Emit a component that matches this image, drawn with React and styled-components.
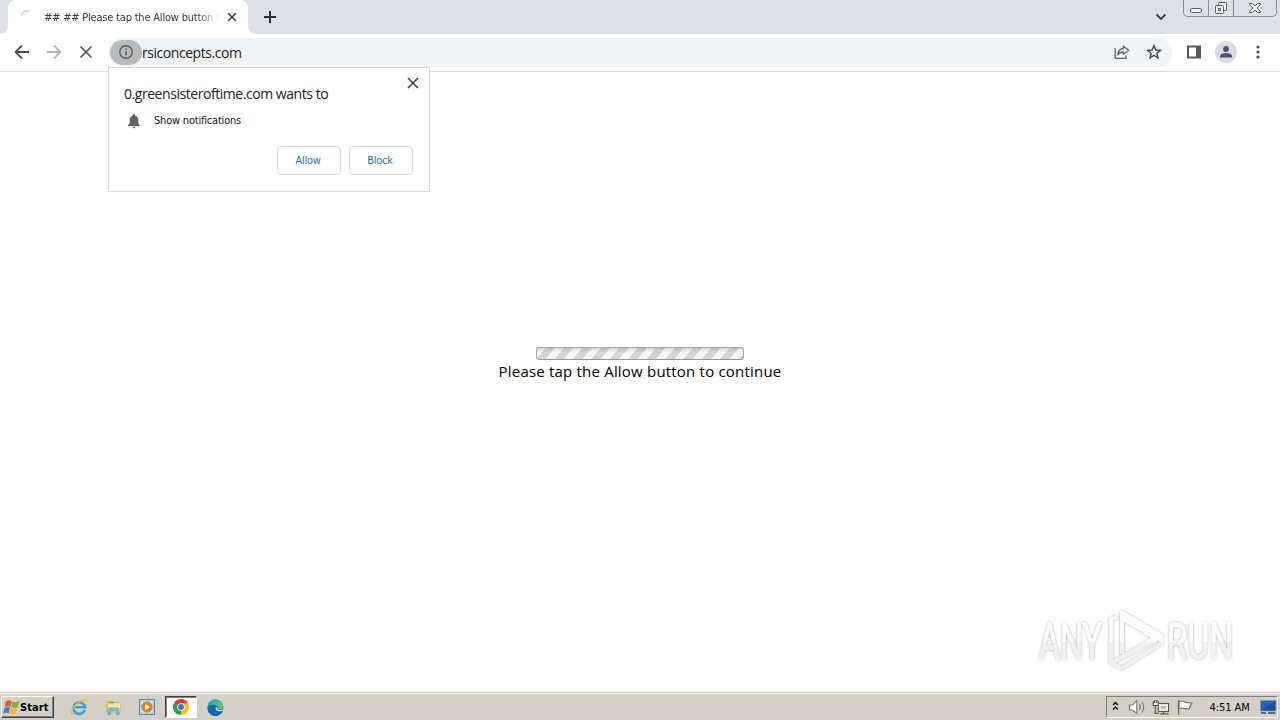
import styled, { createGlobalStyle } from "styled-components";

const GlobalStyle = createGlobalStyle`
  * {
    box-sizing: border-box;
  }
  body {
    margin: 0;
    overflow: hidden;
    background: #fff;
  }
`;

const uiFont = `"DejaVu Sans Condensed", "DejaVu Sans", sans-serif`;
const lightFont = `"Open Sans", "Noto Sans", sans-serif`;

const Screen = styled.div`
  width: 1280px;
  height: 720px;
  display: flex;
  flex-direction: column;
  position: relative;
  font-family: ${uiFont};
  color: #111;
`;

const TabStrip = styled.div`
  height: 34px;
  background: #dee1e6;
  display: flex;
  align-items: flex-start;
  padding-left: 8px;
`;

const Tab = styled.div`
  width: 240px;
  height: 34px;
  background: #fff;
  border-radius: 8px 8px 0 0;
  display: flex;
  align-items: center;
  padding: 0 10px 0 12px;
  position: relative;

  &::before,
  &::after {
    content: "";
    position: absolute;
    bottom: 0;
    width: 8px;
    height: 8px;
  }
  &::before {
    left: -8px;
    background: radial-gradient(circle at 0 0, transparent 7.5px, #fff 8px);
  }
  &::after {
    right: -8px;
    background: radial-gradient(circle at 100% 0, transparent 7.5px, #fff 8px);
  }
`;

const TabTitle = styled.div`
  width: 175px;
  margin-left: 8px;
  overflow: hidden;
  white-space: nowrap;
  font-size: 11px;
  letter-spacing: -0.2px;
  color: #35363a;
  mask-image: linear-gradient(90deg, #000 88%, transparent 100%);
`;

const TabClose = styled.div`
  display: flex;
  margin-left: 8px;
`;

const NewTab = styled.div`
  display: flex;
  margin: 10px 0 0 15px;
`;

const TabSearch = styled.div`
  display: flex;
  margin: 13px 16px 0 auto;
`;

const WindowControls = styled.div`
  display: flex;
  width: 94px;
  height: 17px;
  margin-right: 3px;
  border: 1px solid #8c9097;
  border-top: 0;
  border-radius: 0 0 5px 5px;
`;

const WindowButton = styled.div`
  width: ${(p) => p.$width}px;
  display: flex;
  align-items: center;
  justify-content: center;
  border-right: ${(p) => (p.$last ? 0 : "1px solid #8c9097")};
`;

const Toolbar = styled.div`
  height: 38px;
  background: #fff;
  border-bottom: 1px solid #dcdde0;
  display: flex;
  align-items: center;
  padding: 0 12px 1px 12px;
`;

const NavIcon = styled.div`
  width: 20px;
  height: 20px;
  flex: none;
  margin-right: ${(p) => p.$gap || 0}px;
  display: flex;
  align-items: center;
  justify-content: center;
`;

const Omnibox = styled.div`
  width: 1063px;
  height: 29px;
  flex: none;
  margin-left: 1px;
  border-radius: 14px;
  background: #f1f3f4;
  display: flex;
  align-items: center;
  padding-right: 8px;
`;

const SiteInfo = styled.div`
  width: 32px;
  height: 25px;
  margin-left: 1px;
  border-radius: 13px;
  background: #b9bcbc;
  display: flex;
  align-items: center;
  justify-content: center;
`;

const Url = styled.div`
  flex: 1;
  padding-top: 1px;
  font-family: ${lightFont};
  font-size: 14px;
  letter-spacing: -0.45px;
  color: #202124;
`;

const Actions = styled.div`
  display: flex;
  align-items: center;
  gap: 11px;
  margin-left: 12px;
`;

const Avatar = styled.div`
  width: 22px;
  height: 22px;
  border-radius: 50%;
  background: #dadde3;
  display: flex;
  align-items: center;
  justify-content: center;
`;

const Popup = styled.div`
  position: absolute;
  left: 108px;
  top: 67px;
  width: 322px;
  height: 125px;
  background: #fff;
  border: 1px solid #d6d7d9;
  padding: 9px 16px 0 15px;
`;

const PopupHead = styled.div`
  display: flex;
  justify-content: space-between;
  align-items: flex-start;
  height: 34px;
`;

const PopupTitle = styled.div`
  font-family: ${lightFont};
  font-size: 14px;
  line-height: 20px;
  padding-top: 7px;
  letter-spacing: -0.45px;
  color: #202124;
`;

const PopupClose = styled.div`
  display: flex;
  margin-right: -6px;
`;

const Permission = styled.div`
  height: 20px;
  display: flex;
  align-items: center;
  gap: 12px;
  padding-left: 2px;
  font-size: 11px;
  letter-spacing: -0.2px;
  color: #111;

  & span {
    padding-bottom: 2px;
  }
`;

const PopupActions = styled.div`
  display: flex;
  justify-content: flex-end;
  gap: 8px;
  margin-top: 15px;
`;

const ActionButton = styled.button`
  width: 64px;
  height: 29px;
  padding: 0 2px 0 0;
  border: 1px solid #dadce0;
  border-radius: 4px;
  background: #fff;
  color: #1a73b8;
  font-family: ${uiFont};
  font-size: 11px;
  letter-spacing: -0.3px;
`;

const Page = styled.div`
  flex: 1;
  display: flex;
  flex-direction: column;
  align-items: center;
  padding-top: 275px;
`;

const Progress = styled.div`
  width: 208px;
  height: 13px;
  border: 1px solid #a6a6a6;
  border-bottom-color: #999;
  border-radius: 3px;
  background: linear-gradient(180deg, rgba(80, 80, 80, 0.18), transparent 40%),
    repeating-linear-gradient(
      130deg,
      #f7f7f7 0,
      #f7f7f7 6px,
      #d4d4d4 7px,
      #d4d4d4 13.1px,
      #f7f7f7 14.1px
    );
`;

const Message = styled.div`
  font-family: ${lightFont};
  font-size: 15px;
  line-height: 22px;
  letter-spacing: 0.2px;
  color: #000;
`;

const Watermark = styled.div`
  position: absolute;
  left: 1030px;
  top: 600px;
`;

const Taskbar = styled.div`
  height: 28px;
  background: #d4d0c8;
  border-top: 1px solid #c9c6bf;
  box-shadow: inset 0 1px 0 #fff;
  display: flex;
  align-items: center;
  padding: 1px 2px 0 1px;
`;

const StartButton = styled.div`
  width: 53px;
  height: 22px;
  border: 1px solid;
  border-color: #fff #404040 #404040 #fff;
  box-shadow: inset -1px -1px 0 #808080;
  display: flex;
  align-items: center;
  padding-left: 1px;
  font-size: 11px;
  font-weight: 700;
  letter-spacing: 0.1px;
  color: #000;
`;

const Shortcuts = styled.div`
  display: flex;
  margin-left: 9px;
`;

const Shortcut = styled.div`
  width: 32px;
  height: 22px;
  margin-right: 2px;
  display: flex;
  align-items: center;
  justify-content: center;
  border: 1px solid transparent;
  ${(p) =>
    p.$active &&
    `
    background: #fff;
    border-color: #404040 #fff #fff #404040;
    box-shadow: inset 1px 1px 0 #808080;
  `}
`;

const Tray = styled.div`
  width: 172px;
  height: 22px;
  margin-left: auto;
  border: 1px solid;
  border-color: #808080 #fff #fff #808080;
  display: flex;
  align-items: center;
  padding-left: 5px;
`;

const Clock = styled.div`
  width: 42px;
  margin: 0 9px 0 14px;
  white-space: nowrap;
  font-size: 11px;
  letter-spacing: -0.05px;
  color: #000;
`;

const Cross = ({ size, color = "#45474a", width = 1.7, inset = 1 }) => (
  <svg width={size} height={size} viewBox={`0 0 ${size} ${size}`}>
    <path
      d={`M${inset} ${inset}L${size - inset} ${size - inset}M${size - inset} ${inset}L${inset} ${size - inset}`}
      stroke={color}
      strokeWidth={width}
      fill="none"
    />
  </svg>
);

const Arrow = ({ flip, color }) => (
  <svg width="20" height="20" viewBox="0 0 20 20">
    <path
      d="M17 10H4M10 3.5L3.5 10L10 16.5"
      stroke={color}
      strokeWidth="1.8"
      fill="none"
      transform={flip ? "rotate(180 10 10)" : undefined}
    />
  </svg>
);

const InfoIcon = () => (
  <svg width="16" height="16" viewBox="0 0 16 16">
    <circle cx="8" cy="8" r="6.2" fill="none" stroke="#5a5d5f" strokeWidth="1.4" />
    <path d="M8 7.2V11.5M8 4.5V6" stroke="#5a5d5f" strokeWidth="1.5" />
  </svg>
);

const ShareIcon = () => (
  <svg width="18" height="18" viewBox="0 0 18 18" fill="none" stroke="#5f6368" strokeWidth="1.3">
    <path d="M2.2 5V15.3H13V12.6" />
    <path
      d="M10.3 3.2L15.8 7.3L10.3 11.2V9C7.5 9 6 10 4.8 12C5 8.5 7 5.8 10.3 5.5Z"
      strokeLinejoin="round"
    />
  </svg>
);

const StarIcon = () => (
  <svg width="18" height="18" viewBox="0 0 18 18">
    <path
      d="M9 2.8L10.8 7.1L15.3 7.4L11.8 10.4L13 14.9L9 12.4L5 14.9L6.2 10.4L2.7 7.4L7.2 7.1Z"
      fill="none"
      stroke="#4d5054"
      strokeWidth="1.5"
    />
  </svg>
);

const BellIcon = () => (
  <svg width="16" height="16" viewBox="0 0 16 16" fill="#5f6368">
    <path d="M8 1C8.7 1 9.1 1.5 9.1 2.2V2.6C11.3 3.2 12.3 5 12.3 7.2V10.5L14 12.2V13H2V12.2L3.7 10.5V7.2C3.7 5 4.7 3.2 6.9 2.6V2.2C6.9 1.5 7.3 1 8 1ZM6.5 13.7H9.5C9.5 14.6 8.9 15.2 8 15.2S6.5 14.6 6.5 13.7Z" />
  </svg>
);

const WindowsFlag = () => (
  <svg width="17" height="17" viewBox="0 0 17 17">
    <path d="M3 2.5C5 1 7 1 8.6 2.2L7.4 7.8C5.5 6.8 3.8 7 1.7 8.1Z" fill="#e4572a" />
    <path d="M9.3 2.6C11.5 3.8 13.5 3.5 16.4 2L14.8 7.8C12.5 9 10.2 9.2 8.1 8.1Z" fill="#79b23b" />
    <path d="M1.5 9C3.5 7.9 5.3 7.8 7.1 8.7L5.8 14.3C4.2 13.3 2.2 13.5 0 14.6Z" fill="#3f83cc" />
    <path d="M7.9 9.1C10 10.2 12.2 9.9 14.5 8.8L13 14.5C10.9 15.8 8.7 15.8 6.5 14.7Z" fill="#f5b92c" />
  </svg>
);

const ExplorerIcon = () => (
  <svg width="18" height="18" viewBox="0 0 18 18">
    <path d="M14.8 11.8A5.8 5.8 0 1 1 15 9.3H5" fill="none" stroke="#36a0dc" strokeWidth="2.6" />
    <path
      d="M2.2 16.5C-.5 14 5 6 10.5 3C14 .8 17.5 1 16.5 4.2"
      fill="none"
      stroke="#e8bd3e"
      strokeWidth="1.4"
    />
  </svg>
);

const FolderIcon = () => (
  <svg width="18" height="18" viewBox="0 0 18 18">
    <path d="M1.5 3.5L3 2H7L8 3.5H15V14H1.5Z" fill="#e5c463" />
    <path d="M3.5 5H16.5V14H3.5Z" fill="#f8e7a0" stroke="#d7b957" strokeWidth=".7" />
    <path d="M5 4.5H10" stroke="#5da95b" strokeWidth="1.3" />
    <path
      d="M3.8 16.5V11.5Q3.8 10 5.5 10H13.5Q15 10 15 11.5V16.5H12.5V12.7H6.5V16.5Z"
      fill="#7fc0de"
      stroke="#4c94b7"
      strokeWidth=".6"
    />
  </svg>
);

const PlayerIcon = () => (
  <svg width="18" height="18" viewBox="0 0 18 18">
    <rect x="1.5" y="1.5" width="15" height="15" fill="#a9cdea" stroke="#4c8fc4" />
    <rect x="3.5" y="3.5" width="11" height="11" fill="#e3eff8" />
    <circle cx="9" cy="9" r="5.7" fill="#ef7d13" />
    <path d="M7.2 5.8L12.2 9L7.2 12.2Z" fill="#fff" />
  </svg>
);

const ChromeIcon = () => (
  <svg width="16" height="16" viewBox="0 0 16 16">
    <path d="M8 8L1.07 4A8 8 0 0 1 14.93 4Z" fill="#e33b2e" />
    <path d="M8 8L14.93 4A8 8 0 0 1 8 16Z" fill="#fbc116" />
    <path d="M8 8L8 16A8 8 0 0 1 1.07 4Z" fill="#2da14c" />
    <path d="M8 4.3H14.93L8 8Z" fill="#fbc116" />
    <path d="M4.8 9.85L1.07 4L8 8Z" fill="#2da14c" />
    <circle cx="8" cy="8" r="3.8" fill="#fff" />
    <circle cx="8" cy="8" r="3" fill="#3b78e0" />
  </svg>
);

const EdgeIcon = () => (
  <svg width="17" height="17" viewBox="0 0 17 17">
    <defs>
      <linearGradient id="edgeTop" x1="0" y1="0" x2="1" y2=".5">
        <stop offset="0" stopColor="#269bd8" />
        <stop offset="1" stopColor="#58c66b" />
      </linearGradient>
    </defs>
    <path d="M.5 8.5A8 8 0 0 1 16.5 8.5L15.5 13A8 8 0 0 1 .5 8.5Z" fill="#1368b5" />
    <path
      d="M.6 8C1.2-.3 10-.9 13.8 2.5C17.6 6 16.8 10.5 12.5 10.6C10.5 10.6 9.7 10 10.3 9.2C11.5 6 4.8 4.2.6 8Z"
      fill="url(#edgeTop)"
    />
    <path d="M8.9 8C7.5 10.8 10.2 13 15 12.2L16.5 10C14 11.8 9.5 11 10.2 9Z" fill="#d4dfe0" />
  </svg>
);

const TrayIcons = () => (
  <svg width="84" height="20" viewBox="0 0 84 20" fill="none">
    <path d="M1 8L3.5 5.5L6 8M1 12.5L3.5 10L6 12.5" stroke="#111" strokeWidth="1.5" />
    <g stroke="#777" strokeWidth="1.1">
      <path d="M17.5 8H20.5L25 3.5V16.5L20.5 13H17.5Z" fill="#f7f7f7" />
      <path d="M27.5 7Q29.5 10 27.5 13M30 5Q34 10 30 15.5" />
    </g>
    <g stroke="#555" strokeWidth="1.2">
      <rect x="46.5" y="6.5" width="10.5" height="8" fill="#f2f2ef" />
      <rect x="49" y="9" width="5.5" height="3" fill="#bbb" stroke="none" />
      <path d="M48.5 17H57M52 15V17M43.5 9V16.5H47" />
      <path d="M41.5 4V8.5H46.5V4M43 3V6M45 3V6" fill="#fff" />
    </g>
    <path d="M67 3V17.5" stroke="#666" strokeWidth="1.3" />
    <path
      d="M67.5 4.5C70 3.5 72 3.5 74 5.5L80.5 6L77.5 12C74 12.5 72 10 67.5 11.5Z"
      stroke="#666"
      strokeWidth="1.1"
      fill="#fafafa"
    />
  </svg>
);

const DesktopIcon = () => (
  <svg width="17" height="16" viewBox="0 0 17 16">
    <rect x=".5" y="1.5" width="15.5" height="10.5" fill="#2467b8" stroke="#8199b0" />
    <path d="M1 11.5L15.5 2V11.5Z" fill="#184f9c" />
    <path d="M1 14H6M8 14H15.5" stroke="#304966" strokeWidth="1.5" />
  </svg>
);

const AnyRunLogo = () => (
  <svg width="250" height="84" viewBox="0 0 250 84">
    <defs>
      <filter id="markShadow" x="-10%" y="-10%" width="120%" height="120%">
        <feDropShadow dx="0" dy="0" stdDeviation="1.7" floodColor="#000" floodOpacity=".34" />
      </filter>
      <linearGradient id="markFill" gradientUnits="userSpaceOnUse" x1="0" y1="8" x2="0" y2="76">
        <stop offset=".5" stopColor="#fff" />
        <stop offset=".5" stopColor="#f1f1f1" />
      </linearGradient>
    </defs>
    <g filter="url(#markShadow)" fill="url(#markFill)" fontFamily="Roboto, sans-serif" fontSize="50">
      <g stroke="url(#markFill)" strokeWidth=".3">
        <text x="9" y="59" textLength="63" lengthAdjust="spacingAndGlyphs">
          ANY
        </text>
        <text x="137" y="59" textLength="66" lengthAdjust="spacingAndGlyphs">
          RUN
        </text>
      </g>
      <g fill="none" stroke="url(#markFill)" strokeWidth="4" strokeLinejoin="round">
        <path d="M92 54V13L131 36L128 39L92 18" />
        <path d="M87 17L81 19V63L92 57L125 38" strokeWidth="3.2" />
        <path d="M81 63L92 68L131 44V37L92 58" strokeWidth="3.2" />
      </g>
    </g>
  </svg>
);

const App = () => {
  return (
    <Screen>
      <GlobalStyle />
      <TabStrip>
        <Tab>
          <svg width="16" height="16" viewBox="0 0 16 16">
            <path d="M1.5 6.5Q3 1 9 2" stroke="#c3d3f0" strokeWidth="1.8" fill="none" />
          </svg>
          <TabTitle>## ## Please tap the Allow button to continue</TabTitle>
          <TabClose>
            <Cross size={10} />
          </TabClose>
        </Tab>
        <NewTab>
          <svg width="14" height="14" viewBox="0 0 14 14">
            <path d="M7 1V13M1 7H13" stroke="#2e3033" strokeWidth="2" />
          </svg>
        </NewTab>
        <TabSearch>
          <svg width="12" height="8" viewBox="0 0 12 8">
            <path d="M1.5 1.5L6 6L10.5 1.5" stroke="#3c4043" strokeWidth="1.8" fill="none" />
          </svg>
        </TabSearch>
        <WindowControls>
          <WindowButton $width={25}>
            <svg width="14" height="14" viewBox="0 0 14 14">
              <rect x="1.5" y="7.5" width="11" height="4" rx="1" fill="#f4f5f7" stroke="#5d626a" />
            </svg>
          </WindowButton>
          <WindowButton $width={25}>
            <svg width="14" height="14" viewBox="0 0 14 14" fill="#f4f5f7" stroke="#5d626a">
              <rect x="4.5" y="1.5" width="8" height="8" rx="1" />
              <rect x="1.5" y="4.5" width="8" height="8" rx="1" />
              <rect x="4.5" y="7.5" width="2" height="2" />
            </svg>
          </WindowButton>
          <WindowButton $width={42} $last>
            <svg width="14" height="12" viewBox="0 0 14 12">
              <path
                d="M1.5 1.5H4.5L7 4L9.5 1.5H12.5V2.5L9 6L12.5 9.5V10.5H9.5L7 8L4.5 10.5H1.5V9.5L5 6L1.5 2.5Z"
                fill="#f4f5f7"
                stroke="#5d626a"
              />
            </svg>
          </WindowButton>
        </WindowControls>
      </TabStrip>

      <Toolbar>
        <NavIcon $gap={12}>
          <Arrow color="#494c50" />
        </NavIcon>
        <NavIcon $gap={12}>
          <Arrow flip color="#b4b6b8" />
        </NavIcon>
        <NavIcon $gap={12}>
          <Cross size={20} inset={4.5} color="#505356" />
        </NavIcon>
        <Omnibox>
          <SiteInfo>
            <InfoIcon />
          </SiteInfo>
          <Url>rsiconcepts.com</Url>
          <NavIcon $gap={12}>
            <ShareIcon />
          </NavIcon>
          <NavIcon>
            <StarIcon />
          </NavIcon>
        </Omnibox>
        <Actions>
          <NavIcon>
            <svg width="16" height="16" viewBox="0 0 16 16">
              <rect x="2" y="2.5" width="12" height="11" fill="none" stroke="#55585c" strokeWidth="2" />
              <path d="M10 2H15V14H10Z" fill="#55585c" />
            </svg>
          </NavIcon>
          <Avatar>
            <svg width="14" height="14" viewBox="0 0 14 14" fill="#4b5675">
              <circle cx="7" cy="4" r="2.9" />
              <path d="M1 12.5V11C1 9 4.5 8 7 8S13 9 13 11V12.5Z" />
            </svg>
          </Avatar>
          <NavIcon>
            <svg width="4" height="16" viewBox="0 0 4 16" fill="#4d5054">
              <circle cx="2" cy="3" r="1.6" />
              <circle cx="2" cy="8" r="1.6" />
              <circle cx="2" cy="13" r="1.6" />
            </svg>
          </NavIcon>
        </Actions>
      </Toolbar>

      <Page>
        <Progress />
        <Message>Please tap the Allow button to continue</Message>
      </Page>

      <Taskbar>
        <StartButton>
          <WindowsFlag />
          Start
        </StartButton>
        <Shortcuts>
          <Shortcut>
            <ExplorerIcon />
          </Shortcut>
          <Shortcut>
            <FolderIcon />
          </Shortcut>
          <Shortcut>
            <PlayerIcon />
          </Shortcut>
          <Shortcut $active>
            <ChromeIcon />
          </Shortcut>
          <Shortcut>
            <EdgeIcon />
          </Shortcut>
        </Shortcuts>
        <Tray>
          <TrayIcons />
          <Clock>4:51 AM</Clock>
          <DesktopIcon />
        </Tray>
      </Taskbar>

      <Watermark>
        <AnyRunLogo />
      </Watermark>

      <Popup>
        <PopupHead>
          <PopupTitle>0.greensisteroftime.com wants to</PopupTitle>
          <PopupClose>
            <Cross size={12} />
          </PopupClose>
        </PopupHead>
        <Permission>
          <BellIcon />
          <span>Show notifications</span>
        </Permission>
        <PopupActions>
          <ActionButton>Allow</ActionButton>
          <ActionButton>Block</ActionButton>
        </PopupActions>
      </Popup>
    </Screen>
  );
};

export default App;
